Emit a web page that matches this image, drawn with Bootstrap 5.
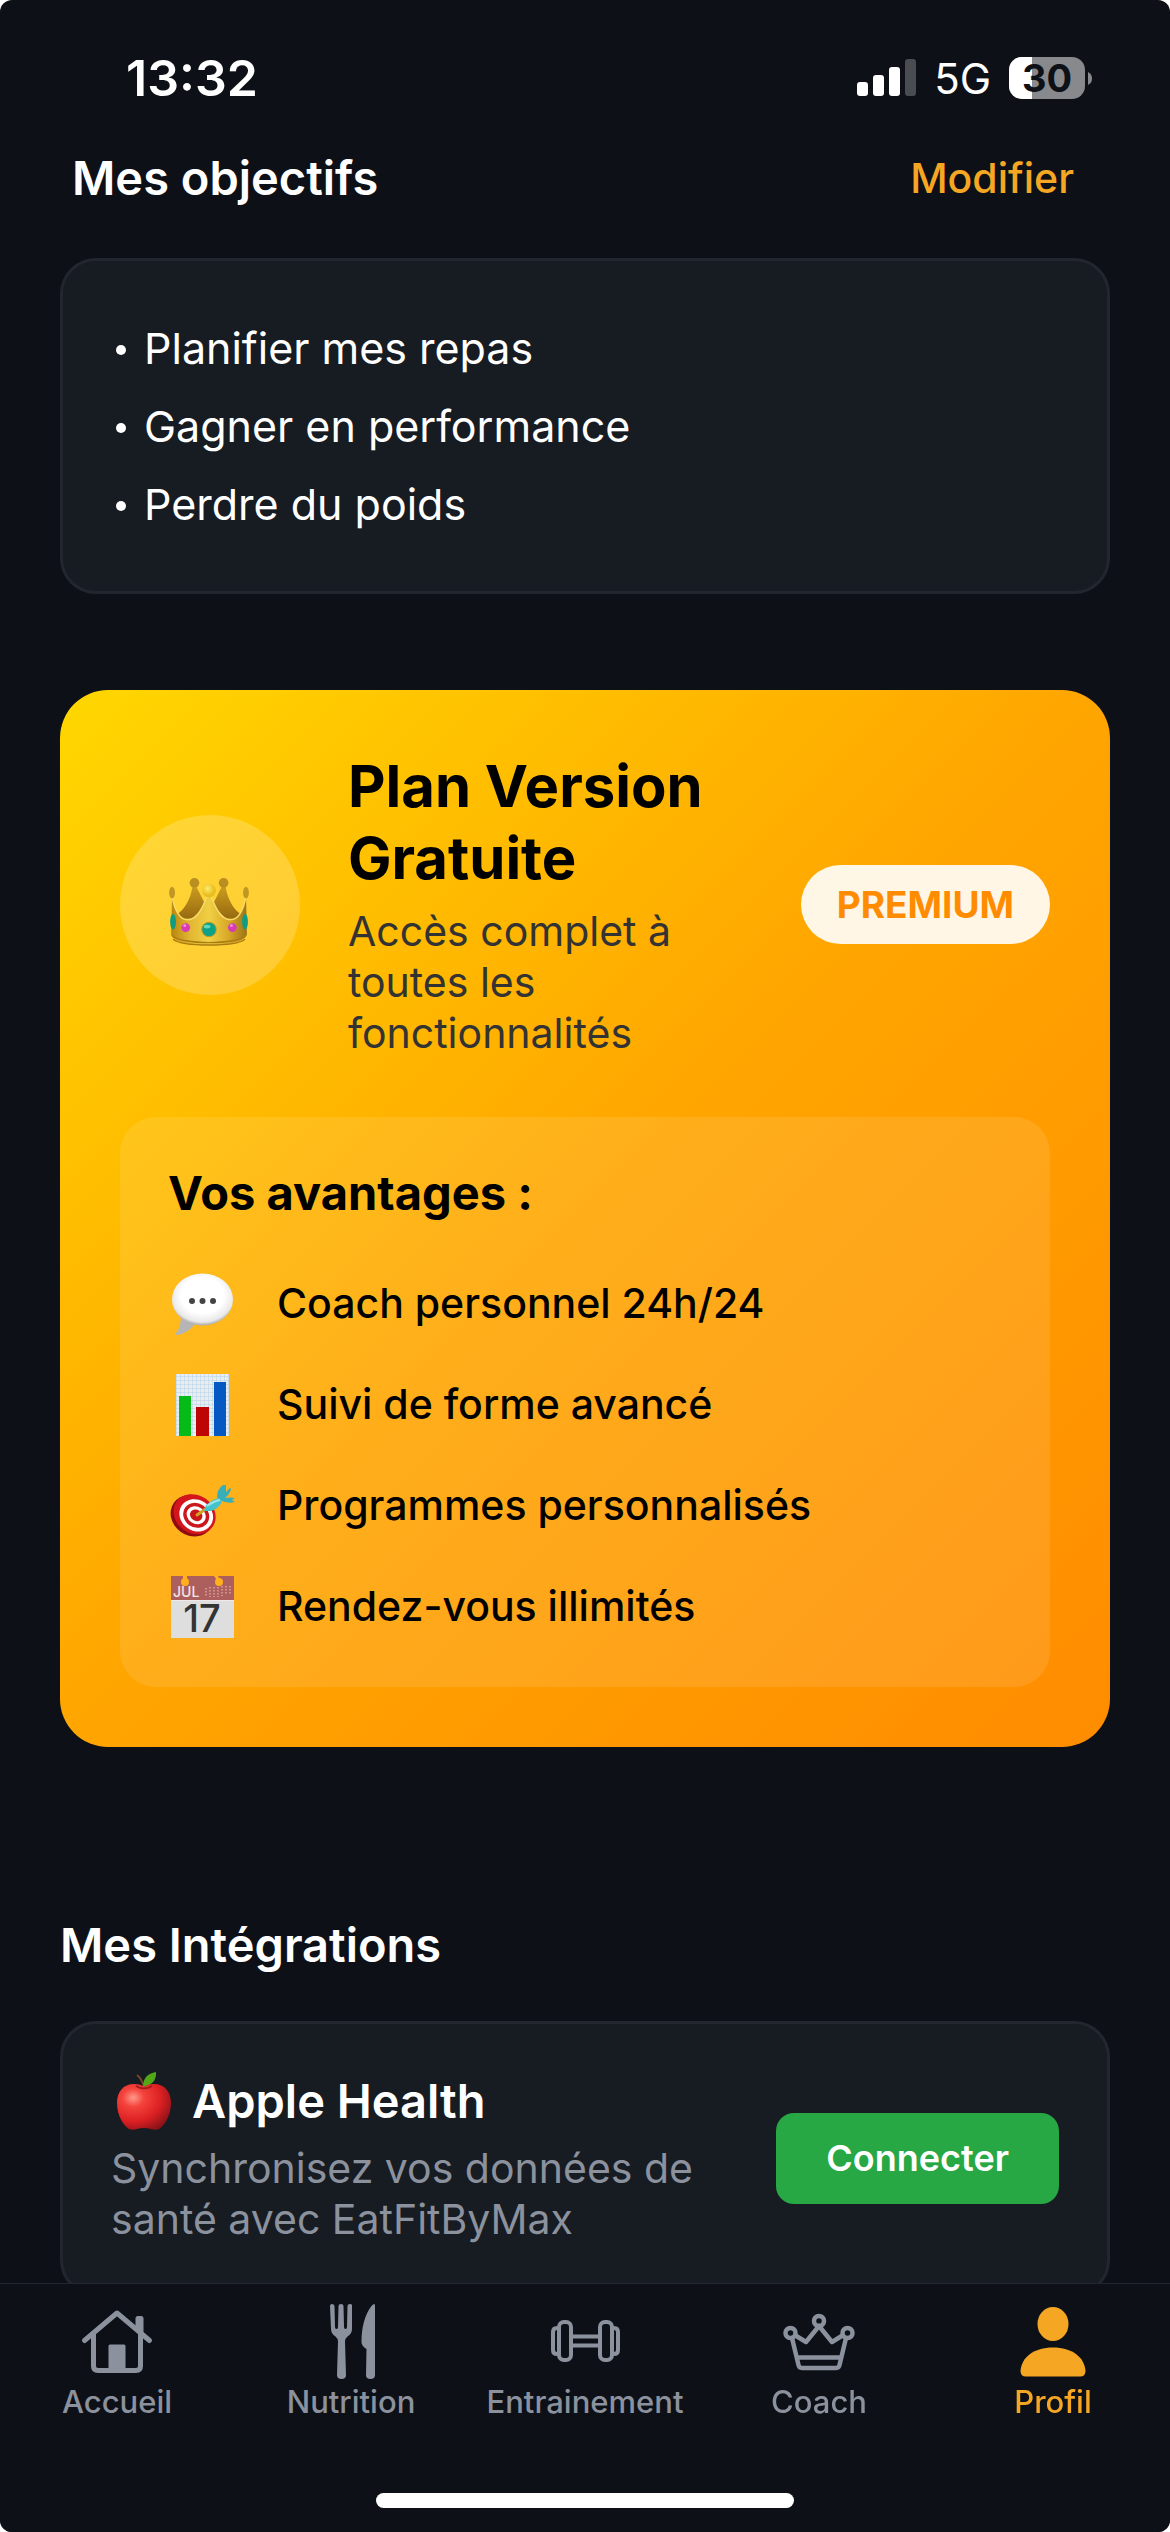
<!DOCTYPE html>
<html lang="fr">
<head>
<meta charset="utf-8">
<meta name="viewport" content="width=device-width, initial-scale=1">
<title>Profil</title>
<link rel="stylesheet" href="https://cdn.jsdelivr.net/npm/bootstrap@5.3.0/dist/css/bootstrap.min.css">
<style>
  :root { --ink: #0d1117; --panel: #171b22; --line: #22262e; --muted-ink: #8b929e; --gold: #f5a623; }
  body { background: #fff; font-family: Inter, "Noto Sans", sans-serif; font-size: 42px; line-height: 51px; color: #fff; }
  h1, h2, h3, p, ul { margin: 0; }
  a { text-decoration: none; }
  svg { display: block; flex: none; overflow: visible; }

  .app-shell { min-height: 100vh; background: var(--ink); border-radius: 12px; padding-bottom: 230px; }
  .app-main { padding: 0 60px; }

  .status-bar { height: 150px; padding: 6px 77px 0 126px; }
  .status-time { font-size: 50px; font-weight: 600; }
  .status-net { font-size: 42px; margin: 0 18px; }
  .battery { width: 84px; height: 42px; }
  .battery-level { left: 0; width: 76px; top: 0; font-size: 38px; font-weight: 700; line-height: 42px; color: var(--ink); }

  .section-title { font-size: 47px; font-weight: 600; line-height: 56px; }
  .goals-head { padding: 0 36px 0 12px; margin-bottom: 52px; }
  .edit-link { color: var(--gold); font-size: 41px; font-weight: 500; line-height: 56px; }

  .panel { background: var(--panel); border: 3px solid var(--line); border-radius: 36px; padding: 48px; }
  .goal-list { font-size: 43px; line-height: 78px; }
  .goal-list li { display: flex; align-items: center; gap: 18px; }
  .goal-list li::before { content: ""; width: 10px; height: 10px; margin: 4px 0 0 5px; border-radius: 50%; background: #fff; }

  .plan { margin-top: 96px; padding: 60px; border-radius: 48px; color: #000; background: linear-gradient(135deg, #ffd700 0%, #ffa500 50%, #ff8c00 100%); }
  .plan-head { gap: 48px; margin-bottom: 58px; }
  .plan-icon { width: 180px; height: 180px; background: rgba(255, 255, 255, .2); }
  .plan-icon svg { margin-top: 14px; }
  .plan-title { font-size: 58px; font-weight: 700; line-height: 72px; margin-bottom: 12px; }
  .plan-text { font-size: 41px; color: #333; }
  .plan-tag { padding: 18px 36px; border-radius: 40px; line-height: 43px; font-size: 37px; font-weight: 700; color: #ff8c00; background: rgba(255, 255, 255, .9); }
  .perks { padding: 48px; border-radius: 36px; background: rgba(255, 255, 255, .1); }
  .perks-title { font-size: 47px; font-weight: 700; line-height: 56px; margin-bottom: 50px; }
  .perk-list { display: grid; gap: 36px; font-size: 41px; font-weight: 500; line-height: 65px; }
  .perk-list li { display: flex; align-items: center; gap: 41px; }

  .integrations { margin-top: 170px; }
  .integrations-title { margin-bottom: 48px; }
  .service-name { gap: 15px; margin-bottom: 14px; }
  .service-text { font-size: 41px; color: var(--muted-ink); }
  .btn-connect { padding: 20px 50px; border: 0; border-radius: 18px; background: #28a745; color: #fff; font-size: 36px; font-weight: 600; line-height: 51px; }
  .btn-connect:hover { background: #218838; color: #fff; }

  .tab-bar { height: 249px; padding-top: 12px; background: var(--ink); border-top: 1px solid var(--line); border-radius: 0 0 12px 12px; }
  .tab-link { flex: 1 1 0; color: var(--muted-ink); font-size: 31px; font-weight: 500; line-height: 36px; }
  .tab-link.active { color: var(--gold); }
  .home-bar { width: 36%; max-width: 418px; height: 15px; margin-bottom: 24px; background: #fff; }
</style>
</head>
<body>
<div class="app-shell">
  <header class="status-bar d-flex align-items-center justify-content-between">
    <span class="status-time">13:32</span>
    <div class="d-flex align-items-center">
      <svg width="59" height="38" viewBox="0 0 59 38" fill="#fff" aria-hidden="true"><rect y="23" width="11" height="14" rx="3"/><rect x="16" y="16" width="11" height="21" rx="3"/><rect x="32" y="8" width="11" height="29" rx="3"/><rect x="48" width="11" height="37" rx="3" opacity=".25"/></svg>
      <span class="status-net">5G</span>
      <div class="battery position-relative">
        <svg width="84" height="42" viewBox="0 0 84 42" aria-hidden="true"><defs><clipPath id="cell"><rect width="76" height="42" rx="13"/></clipPath></defs><g clip-path="url(#cell)"><rect width="76" height="42" fill="#88898d"/><rect width="23" height="42" fill="#fff"/></g><path d="M79 15q4 2 4 6.500t-4 6.500z" fill="#88898d"/></svg>
        <span class="battery-level position-absolute text-center">30</span>
      </div>
    </div>
  </header>

  <main class="app-main">
    <section>
      <div class="goals-head d-flex justify-content-between align-items-center">
        <h2 class="section-title">Mes objectifs</h2>
        <a class="edit-link" href="#objectifs">Modifier</a>
      </div>
      <div class="panel" id="objectifs">
        <ul class="goal-list list-unstyled">
          <li>Planifier mes repas</li>
          <li>Gagner en performance</li>
          <li>Perdre du poids</li>
        </ul>
      </div>
    </section>

    <section class="plan">
      <div class="plan-head d-flex align-items-center">
        <div class="plan-icon rounded-circle d-flex align-items-center justify-content-center flex-shrink-0">
          <svg width="82" height="70" viewBox="0 0 84 72" aria-hidden="true">
            <defs>
              <linearGradient id="goldBand" x1="0" x2="1"><stop offset="0" stop-color="#b8860f"/><stop offset=".25" stop-color="#e2b731"/><stop offset=".5" stop-color="#f0cf45"/><stop offset=".75" stop-color="#d9a928"/><stop offset="1" stop-color="#9d7416"/></linearGradient>
              <linearGradient id="goldBack" x2="0" y2="1"><stop offset="0" stop-color="#c99c1f"/><stop offset="1" stop-color="#98690f"/></linearGradient>
              <radialGradient id="pearl" cx=".4" cy=".35"><stop offset="0" stop-color="#ffec6b"/><stop offset="1" stop-color="#e8bd22"/></radialGradient>
            </defs>
            <path d="M8 38C16 34 22 22 24 10h4l8 16-4 17H12zM74 38C66 34 60 22 58 10h-4l-8 16 4 17h20z" fill="url(#goldBack)"/>
            <circle cx="26" cy="6" r="5" fill="#b98f22"/><circle cx="56" cy="6" r="5" fill="#b98f22"/>
            <path d="M3 19c2 15 8 25 16 25 10 0 16-13 22-29 6 16 12 29 22 29 8 0 14-10 16-25l1 40c-3 15-76 15-78 0z" fill="url(#goldBand)"/>
            <path d="M3 19c2 15 8 25 16 25 10 0 16-13 22-29 6 16 12 29 22 29 8 0 14-10 16-25" fill="none" stroke="#f7dc6a" stroke-width="1.500"/>
            <path d="M3 60c8 10 68 10 76 0M4 64c10 8 64 8 74 0" fill="none" stroke="#a97b13" stroke-width="1.500"/>
            <ellipse cx="3" cy="16" rx="3" ry="6" fill="#c19724"/><ellipse cx="79" cy="16" rx="3" ry="6" fill="#c19724"/>
            <circle cx="41" cy="14" r="7" fill="url(#pearl)"/>
            <ellipse cx="41" cy="54" rx="7.500" ry="7.500" fill="#0da287" stroke="#c59b20"/><ellipse cx="39" cy="51" rx="3.500" ry="2" fill="#5fd8bb"/>
            <circle cx="17" cy="52" r="4.500" fill="#d83ab8"/><circle cx="65" cy="52" r="4.500" fill="#d83ab8"/><circle cx="16" cy="50" r="1.500" fill="#f296df"/><circle cx="64" cy="50" r="1.500" fill="#f296df"/>
            <ellipse cx="4" cy="46" rx="3" ry="8" fill="#109c83"/><ellipse cx="78" cy="46" rx="3" ry="8" fill="#109c83"/>
          </svg>
        </div>
        <div class="flex-grow-1">
          <h2 class="plan-title">Plan Version Gratuite</h2>
          <p class="plan-text">Accès complet à toutes les fonctionnalités</p>
        </div>
        <span class="plan-tag flex-shrink-0">PREMIUM</span>
      </div>

      <div class="perks">
        <h3 class="perks-title">Vos avantages :</h3>
        <ul class="perk-list list-unstyled">
          <li>
            <svg width="68" height="65" viewBox="0 0 68 65" aria-hidden="true"><defs><radialGradient id="bub" cx=".5" cy=".42" r=".58"><stop offset=".6" stop-color="#fff"/><stop offset=".88" stop-color="#e9e9e9"/><stop offset="1" stop-color="#a9a9a9"/></radialGradient></defs><path d="M13 44c0 9-2 15-5 18-1 2 0 2 2 2 8-2 13-6 18-12z" fill="#b5b5b5"/><ellipse cx="34.500" cy="28.500" rx="30.500" ry="26" fill="url(#bub)"/><g fill="#444"><circle cx="24" cy="30" r="3"/><circle cx="34.500" cy="30" r="3"/><circle cx="45" cy="30" r="3"/></g></svg>
            Coach personnel 24h/24
          </li>
          <li>
            <svg width="68" height="65" viewBox="0 0 68 65" aria-hidden="true"><defs><pattern id="grid" width="4" height="4" patternUnits="userSpaceOnUse"><path d="M0 0h4M0 0v4" stroke="#b4d0e6" stroke-width="1"/></pattern></defs><rect x="8" y="2" width="53" height="62" fill="#e9eef3"/><rect x="8" y="2" width="53" height="62" fill="url(#grid)"/><rect x="11" y="24" width="12" height="40" fill="#06bb17"/><rect x="28" y="35" width="13" height="29" fill="#bd0505"/><rect x="46" y="10" width="12" height="54" fill="#0658c2"/></svg>
            Suivi de forme avancé
          </li>
          <li>
            <svg width="68" height="65" viewBox="0 0 68 65" aria-hidden="true"><g transform="translate(1 4)"><g transform="rotate(35 25 38)"><ellipse cx="24" cy="39.500" rx="22.500" ry="20" fill="#8f0d10"/><ellipse cx="25" cy="37" rx="22" ry="19" fill="#d4161c"/><ellipse cx="27" cy="37" rx="17.500" ry="15.500" fill="#fff"/><ellipse cx="27" cy="37" rx="13.500" ry="12" fill="#cc171c"/><ellipse cx="27" cy="37" rx="10" ry="8.500" fill="#fff"/><ellipse cx="27" cy="37" rx="6.500" ry="5.500" fill="#c9161b"/></g><path d="M28 38 38 31" stroke="#d5a21d" stroke-width="3" stroke-linecap="round"/><path d="M35 34l2-6q7-6 13-7l3 4q-4 7-11 9z" fill="#45c3cd"/><path d="M48 20q0-8 6-12l3 0 0 7 4-4 1 1q-1 5-6 9 5-1 10 0l-3 2 3 2q-8 2-15-2z" fill="#37aeb8"/><path d="M38 29q7-5 13-6" stroke="#9de6ea" stroke-width="2" fill="none"/></g></svg>
            Programmes personnalisés
          </li>
          <li>
            <svg width="68" height="65" viewBox="0 0 68 65" aria-hidden="true"><rect x="3" y="2" width="63" height="62" fill="#dedede"/><rect x="3" y="2" width="63" height="24" fill="#ad5f5e"/><path d="M3 26.500h63" stroke="#f1e9e9"/><g fill="#ffb01b"><circle cx="17" cy="8" r="4"/><circle cx="51" cy="8" r="4"/><path d="M15 2h4v4h-4zM46 2h4l2 4h-3z"/></g><g stroke="#d9a4a3" stroke-width="1.500" stroke-dasharray="1.500 1.500"><path d="M38 14v9M42 13v10M46 13v10M50 13v10M54 12v10M58 12v9M62 12v8"/></g><text x="5" y="23" font-size="14" fill="#f2e6e6" font-weight="500">JUL</text><text x="34" y="58" font-size="38" fill="#333" text-anchor="middle" font-weight="500">17</text></svg>
            Rendez-vous illimités
          </li>
        </ul>
      </div>
    </section>

    <section class="integrations">
      <h2 class="section-title integrations-title">Mes Intégrations</h2>
      <div class="panel d-flex align-items-center justify-content-between">
        <div>
          <h3 class="service-name section-title d-flex align-items-center">
            <svg width="66" height="57" viewBox="0 0 66 57" aria-hidden="true"><defs><radialGradient id="apple" cx=".3" cy=".3" r=".8"><stop offset="0" stop-color="#ff9a8c"/><stop offset=".25" stop-color="#f4433c"/><stop offset=".65" stop-color="#dc2023"/><stop offset="1" stop-color="#8a1218"/></radialGradient></defs><path d="M33 15Q31 7 26 3" fill="none" stroke="#7a4526" stroke-width="2"/><path d="M32 15Q32 2 45 0 46 12 32 15z" fill="#51a715"/><path d="M33 15q3-3 10-3c11 0 17 8 17 19 0 13-7 23-12 26-5 2-9-1-15-1s-10 3-15 1C13 54 6 44 6 31c0-11 6-19 17-19q7 0 10 3z" fill="url(#apple)"/><path d="M25 14q8 5 16 0" fill="none" stroke="#a31a1b" stroke-width="2"/></svg>
            Apple Health
          </h3>
          <p class="service-text">Synchronisez vos données de<br>santé avec EatFitByMax</p>
        </div>
        <button type="button" class="btn btn-connect flex-shrink-0">Connecter</button>
      </div>
    </section>
  </main>
</div>

<nav class="tab-bar fixed-bottom d-flex flex-column justify-content-between align-items-center" aria-label="Navigation principale">
  <div class="d-flex w-100">
    <a class="tab-link d-flex flex-column align-items-center" href="#accueil">
      <svg width="78" height="88" viewBox="0 0 78 88" fill="none" stroke="currentColor" stroke-width="5" stroke-linecap="round" stroke-linejoin="round" aria-hidden="true"><path d="M6.500 44.500 39 17l32.500 27.500"/><path d="M15.500 39v31q0 4.500 4.500 4.500h38q4.500 0 4.500-4.500V39"/><path d="M59 23.500v-1q0-1 1-1h3q1 0 1 1V38l-5-4z" fill="currentColor" stroke-width="3"/><path d="M32 48.500h14q1.500 0 1.500 1.500v24h-17V50q0-1.500 1.500-1.500z" fill="currentColor" stroke="none"/></svg>
      Accueil
    </a>
    <a class="tab-link d-flex flex-column align-items-center" href="#nutrition">
      <svg width="78" height="88" viewBox="0 0 78 88" fill="currentColor" aria-hidden="true"><path d="M18 10q0-2 2-2t2.500 2l.5 21q0 2 1.500 2t1.500-2l.5-21q0-2 2.500-2t2.500 2l.5 21q0 2 1.500 2t1.500-2l.5-21q0-2 2.500-2t2 2L40 33q0 5-4.500 7.500-2.500 2-2.500 5l1 33.500q0 4-4.500 4t-4.500-4l1-33.500q0-3-2.500-5-4.500-2.500-4.500-7.500z"/><path d="M63 10v69q0 4-4.500 4t-4.500-4l.5-26q-5-3-5-7c0-14 3-27 10-36q3.500-4 3.500 0z"/></svg>
      Nutrition
    </a>
    <a class="tab-link d-flex flex-column align-items-center" href="#entrainement">
      <svg width="78" height="88" viewBox="0 0 78 88" fill="none" stroke="currentColor" stroke-width="4" aria-hidden="true"><rect x="13" y="26" width="12" height="38" rx="5"/><rect x="54" y="26" width="12" height="38" rx="5"/><path d="M13 32h-2q-4 0-4 4v18q0 4 4 4h2M66 32h2q4 0 4 4v18q0 4-4 4h-2M25 40.500h29M25 49.500h29"/></svg>
      Entrainement
    </a>
    <a class="tab-link d-flex flex-column align-items-center" href="#coach">
      <svg width="78" height="88" viewBox="0 0 78 88" fill="none" stroke="currentColor" stroke-width="4.500" stroke-linejoin="round" aria-hidden="true"><circle cx="39" cy="25" r="5"/><circle cx="10.500" cy="37" r="5"/><circle cx="67.500" cy="37" r="5"/><path d="M15.500 39.500 26 46 39 30l13 16 10.500-6.500M12 42l6.500 27q.5 3 3.500 3h34q3 0 3.500-3L66 42M17 61.500h44"/></svg>
      Coach
    </a>
    <a class="tab-link active d-flex flex-column align-items-center" href="#profil" aria-current="page">
      <svg width="78" height="88" viewBox="0 0 78 88" fill="currentColor" aria-hidden="true"><ellipse cx="39" cy="28" rx="15.500" ry="17"/><path d="M6.500 75C7.500 61 20 51.500 39 51.500S70.500 61 71.500 75q0 5.500-5.500 5.500H12q-5.500 0-5.500-5.500z"/></svg>
      Profil
    </a>
  </div>
  <div class="home-bar rounded-pill"></div>
</nav>
<script src="https://cdn.jsdelivr.net/npm/bootstrap@5.3.0/dist/js/bootstrap.bundle.min.js"></script>
</body>
</html>
